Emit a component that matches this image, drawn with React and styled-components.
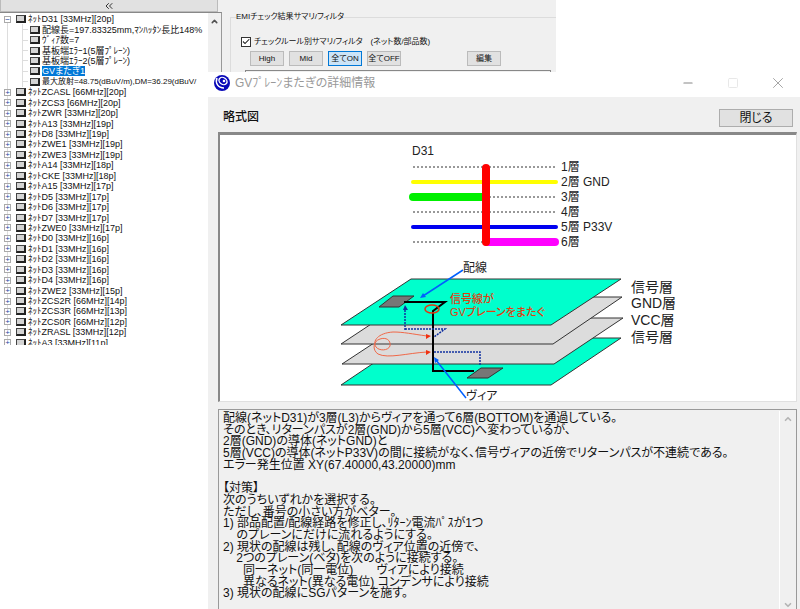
import React, { useState } from "react";
import styled, { createGlobalStyle } from "styled-components";
import { ChevronDown, ChevronUp, ChevronsLeft, Minus, Square, X } from "lucide-react";

const details = [
  "配線長=197.83325mm,ﾏﾝﾊｯﾀﾝ長比148%",
  "ｳﾞｨｱ数=7",
  "基板端ｴﾗｰ1(5層ﾌﾟﾚｰﾝ)",
  "基板端ｴﾗｰ2(5層ﾌﾟﾚｰﾝ)",
  "GVまたぎ1",
  "最大放射=48.75(dBuV/m),DM=36.29(dBuV/"
];

const nets = [
  "ZCASL [66MHz][20p]",
  "ZCS3 [66MHz][20p]",
  "ZWR [33MHz][20p]",
  "A13 [33MHz][19p]",
  "D8 [33MHz][19p]",
  "ZWE1 [33MHz][19p]",
  "ZWE3 [33MHz][19p]",
  "A14 [33MHz][18p]",
  "CKE [33MHz][18p]",
  "A15 [33MHz][17p]",
  "D5 [33MHz][17p]",
  "D6 [33MHz][17p]",
  "D7 [33MHz][17p]",
  "ZWE0 [33MHz][17p]",
  "D0 [33MHz][16p]",
  "D1 [33MHz][16p]",
  "D2 [33MHz][16p]",
  "D3 [33MHz][16p]",
  "D4 [33MHz][16p]",
  "ZWE2 [33MHz][15p]",
  "ZCS2R [66MHz][14p]",
  "ZCS3R [66MHz][13p]",
  "ZCS0R [66MHz][12p]",
  "ZRASL [33MHz][12p]",
  "A3 [33MHz][11p]"
];

const message = [
  "配線(ネットD31)が3層(L3)からヴィアを通って6層(BOTTOM)を通過している。",
  "そのとき、リターンパスが2層(GND)から5層(VCC)へ変わっているが、",
  "2層(GND)の導体(ネットGND)と",
  "5層(VCC)の導体(ネットP33V)の間に接続がなく、信号ヴィアの近傍でリターンパスが不連続である。",
  "エラー発生位置 XY(67.40000,43.20000)mm",
  "",
  "【対策】",
  "次のうちいずれかを選択する。",
  "ただし、番号の小さい方がベター。",
  "1) 部品配置/配線経路を修正し、ﾘﾀｰﾝ電流ﾊﾟｽが1つ",
  "    のプレーンにだけに流れるようにする。",
  "2) 現状の配線は残し、配線のヴィア位置の近傍で、",
  "    2つのプレーン(ベタ)を次のように接続する。",
  "      同一ネット(同一電位)       ヴィアにより接続",
  "      異なるネット(異なる電位) コンデンサにより接続",
  "3) 現状の配線にSGパターンを施す。"
];

const layers = [
  { y: 167, label: "1層" },
  { y: 182, label: "2層 GND" },
  { y: 197, label: "3層" },
  { y: 212, label: "4層" },
  { y: 227, label: "5層 P33V" },
  { y: 242, label: "6層" }
];

const LayerDiagram = () => (
  <Drawing viewBox="220 135 576 266" role="img" aria-label="D31">
    <text x="412" y="155" fontSize="12">D31</text>
    {layers.map(layer => (
      <g key={layer.y}>
        <path d={`M413 ${layer.y}H556`} stroke="#333" strokeDasharray="2 2" />
        <text x="561" y={layer.y + 4} fontSize="12">{layer.label}</text>
      </g>
    ))}
    <g fill="none" strokeLinecap="round">
      <path d="M413 182H556" stroke="#ffff00" strokeWidth="4" />
      <path d="M413 197H485" stroke="#00f000" strokeWidth="8" />
      <path d="M413 227H556" stroke="#0000f0" strokeWidth="4" />
      <path d="M487 242H555" stroke="#ff00ff" strokeWidth="8" />
      <path d="M486 168V242" stroke="#ff0000" strokeWidth="8" />
    </g>

    {/* board stack, bottom plane first */}
    <g stroke="#333" strokeWidth="1">
      <path d="M341 385L411 338H621L551 385Z" fill="#00ffcc" />
      <path d="M342 364L412 318H623L554 364Z" fill="#dcdcdc" />
      <path d="M341 344L412 297H622L553 344Z" fill="#dcdcdc" />
      <path d="M341 325L411 279H621L551 325Z" fill="#00ffcc" />
      <path d="M379 307L393 296H414L399 307Z" fill="#777" />
    </g>
    <path d="M404 302H445L433 311V371H474" fill="none" stroke="#000" strokeWidth="2" />
    <path d="M467 378L481 368H503L488 378Z" fill="#777" stroke="#333" />

    <g fill="none" stroke="#1030a0" strokeDasharray="2 1" strokeWidth="1.5">
      <path d="M405 330V309" />
      <path d="M405 329H445L434 337" />
      <path d="M434 352H480V366" />
    </g>
    <path d="M403 310L405 305L408 310Z" fill="#1030a0" />

    <g fill="none" stroke="#f06848">
      <path d="M427 336C412 334 404 332 393 332C378 333 372 341 376 347C379 351 388 351 390 346C391 340 386 337 380 339C373 341 372 350 378 354C388 359 408 353 427 352" />
      <ellipse cx="432" cy="309" rx="7" ry="4" stroke="#e03810" strokeWidth="1.5" />
    </g>
    <path d="M426 334L431 336L426 339ZM426 350L431 352L426 355Z" fill="#f03010" />

    <g stroke="#0060ff" strokeWidth="1.5">
      <path d="M463 270L423 296" />
      <path d="M466 398L436 360" />
    </g>
    <path d="M420 298L423 293L426 297ZM434 357L439 360L435 363Z" fill="#0060ff" />

    <g fill="#e04010" fontSize="11" fontWeight="500">
      <text x="450" y="303">信号線が</text>
      <text x="450" y="316">GVプレーンをまたぐ</text>
    </g>
    <g fontSize="12">
      <text x="463" y="272">配線</text>
      <text x="466" y="400">ヴィア</text>
    </g>
    <g fontSize="14">
      <text x="631" y="292">信号層</text>
      <text x="631" y="308">GND層</text>
      <text x="631" y="325">VCC層</text>
      <text x="631" y="342">信号層</text>
    </g>
  </Drawing>
);

export default function App() {
  const [byRule, setByRule] = useState(true);

  return (
    <Desktop>
      <GlobalStyle />
      <MainWindow>
        <TreeColumn>
          <CollapseButton aria-label="閉じる">
            <ChevronsLeft size={12} strokeWidth={2} />
          </CollapseButton>
          <TreePane>
            <Tree>
              <TreeRow>
                <Expander>−</Expander>
                <NetIcon />
                <RowText>ﾈｯﾄD31 [33MHz][20p]</RowText>
              </TreeRow>
              {details.map(text => (
                <ChildRow key={text}>
                  <NetIcon />
                  <RowText $selected={text === "GVまたぎ1"} $small={text.length > 30}>
                    {text}
                  </RowText>
                </ChildRow>
              ))}
              {nets.map(net => (
                <TreeRow key={net}>
                  <Expander>+</Expander>
                  <NetIcon />
                  <RowText>ﾈｯﾄ{net}</RowText>
                </TreeRow>
              ))}
            </Tree>
            <TreeScrollbar>
              <ScrollButton aria-label="上へ">
                <ChevronUp size={9} strokeWidth={4} />
              </ScrollButton>
            </TreeScrollbar>
          </TreePane>
        </TreeColumn>

        <FilterPane>
          <FilterGroup>
            <Legend>EMIチェック結果サマリ/フィルタ</Legend>
            <CheckLine>
              <Checkbox
                id="by-rule"
                type="checkbox"
                checked={byRule}
                onChange={e => setByRule(e.target.checked)}
              />
              <label htmlFor="by-rule">チェックルール別サマリ/フィルタ</label>
              <CountNote>(ネット数/部品数)</CountNote>
            </CheckLine>
            <ButtonLine>
              <SmallButton>High</SmallButton>
              <SmallButton>Mid</SmallButton>
              <SmallButton $active>全てON</SmallButton>
              <SmallButton>全てOFF</SmallButton>
              <EditButton>編集</EditButton>
            </ButtonLine>
            <ResultTop />
          </FilterGroup>
        </FilterPane>
      </MainWindow>

      <Dialog>
        <TitleBar>
          <AppIcon viewBox="0 0 16 16">
            <circle cx="8" cy="8" r="8" fill="#0808b8" />
            <path d="M3 3C1 8 4 13 10 13" fill="none" stroke="#fff" strokeWidth="1.5" />
            <ellipse cx="9" cy="6" rx="5" ry="4" fill="#fff" transform="rotate(35 9 6)" />
            <ellipse cx="9" cy="6" rx="3.5" ry="2.7" fill="#0808b8" transform="rotate(35 9 6)" />
            <circle cx="10" cy="6" r="1.3" fill="#fff" />
          </AppIcon>
          <Title>GVﾌﾟﾚｰﾝまたぎの詳細情報</Title>
          <WindowButtons>
            <WindowButton aria-label="最小化"><Minus size={14} strokeWidth={2} /></WindowButton>
            <WindowButton aria-label="最大化" disabled><Square size={12} strokeWidth={2} /></WindowButton>
            <WindowButton aria-label="閉じる"><X size={18} strokeWidth={1} /></WindowButton>
          </WindowButtons>
        </TitleBar>
        <DialogBody>
          <DialogHeader>
            <Heading>略式図</Heading>
            <CloseButton>閉じる</CloseButton>
          </DialogHeader>
          <Canvas>
            <LayerDiagram />
          </Canvas>
          <MessageBox>
            <Message>
              {message.map((line, i) => (
                <Line key={i}>{line}</Line>
              ))}
            </Message>
            <MessageScrollbar>
              <ScrollButton $muted aria-label="上へ">
                <ChevronUp size={10} strokeWidth={4} />
              </ScrollButton>
              <ScrollButton $muted aria-label="下へ">
                <ChevronDown size={10} strokeWidth={4} />
              </ScrollButton>
            </MessageScrollbar>
          </MessageBox>
        </DialogBody>
      </Dialog>
    </Desktop>
  );
}

const GlobalStyle = createGlobalStyle`
  * {
    box-sizing: border-box;
  }
  body {
    margin: 0;
    background: #fff;
    color: #111;
    font-family: "Liberation Sans", "Noto Sans CJK JP", sans-serif;
    font-feature-settings: "palt" 1;
  }
  button {
    padding: 0;
    color: inherit;
    font: inherit;
    font-feature-settings: inherit;
  }
`;

const Desktop = styled.div`
  position: relative;
  min-height: 100vh;
  overflow: hidden;
`;

const MainWindow = styled.div`
  display: flex;
  align-items: flex-start;
  max-width: 556px;
`;

const TreeColumn = styled.div`
  display: flex;
  flex-direction: column;
  flex: 0 0 222px;
  min-width: 0;
  background: #f0f0f0;
`;

const CollapseButton = styled.button`
  display: flex;
  align-items: center;
  justify-content: center;
  height: 12px;
  margin-right: 4px;
  border: 1px solid #bbb;
  border-top: 0;
  background: #e1e1e1;
  color: #333;
`;

const TreePane = styled.div`
  display: flex;
  height: 333px;
  overflow: hidden;
  border-top: 1px solid #888;
  border-right: 1px solid #999;
  background: #fff;
`;

const Tree = styled.ul`
  display: grid;
  grid-auto-rows: 1fr;
  flex: 1;
  min-width: 0;
  height: 335px;
  margin: 0;
  padding: 1px 0 0 4px;
  overflow: hidden;
  background: linear-gradient(#ddd, #ddd) 7px 8px / 1px 100% no-repeat;
  list-style: none;
  font-size: 9px;
  line-height: 10px;
`;

const TreeRow = styled.li`
  display: flex;
  align-items: center;
  gap: 2px;
  min-width: 0;
  min-height: 0;
  white-space: nowrap;
`;

/* nested row with its branch line */
const ChildRow = styled(TreeRow)`
  padding-left: 18px;
  background: linear-gradient(#ddd, #ddd) 18px 0 / 1px 100% no-repeat;

  &::before {
    content: "";
    width: 6px;
    height: 1px;
    background: #ddd;
  }
`;

const Expander = styled.span`
  display: flex;
  flex-shrink: 0;
  align-items: center;
  justify-content: center;
  width: 7px;
  height: 7px;
  margin-right: 3px;
  border: 1px solid #aaa;
  background: #fff;
  color: #2848a0;
  font-size: 8px;
  line-height: 5px;
`;

const NetIcon = styled.span`
  flex-shrink: 0;
  width: 10px;
  height: 8px;
  border: 1px solid #444;
  border-right: 2px solid #222;
  border-bottom: 2px solid #222;
  background: #d4d4d4;
`;

const RowText = styled.span`
  background: ${props => (props.$selected ? "#0078d7" : "transparent")};
  color: ${props => (props.$selected ? "#fff" : "inherit")};
  font-size: ${props => (props.$small ? "8px" : "9px")};
`;

const TreeScrollbar = styled.div`
  flex: 0 0 13px;
  background: #f0f0f0;
`;

const ScrollButton = styled.button`
  display: flex;
  align-items: center;
  justify-content: center;
  width: 100%;
  height: 16px;
  border: 0;
  background: transparent;
  color: ${props => (props.$muted ? "#b4b4b4" : "#505050")};
`;

const FilterPane = styled.div`
  flex: 1;
  min-width: 0;
  padding: 9px 0 0 8px;
  background: #f0f0f0;
  font-size: 8px;
  line-height: 16px;
`;

const FilterGroup = styled.fieldset`
  min-width: 0;
  margin: 0;
  padding: 9px 5px 0 10px;
  border: 1px solid #dcdcdc;
  border-right: 0;
  border-bottom: 0;
`;

const Legend = styled.legend`
  margin-left: -5px;
  padding: 0;
`;

const CheckLine = styled.div`
  display: flex;
  align-items: center;
  gap: 3px;
`;

const Checkbox = styled.input`
  display: grid;
  place-items: center;
  width: 10px;
  height: 10px;
  margin: 0;
  appearance: none;
  border: 1px solid #333;
  background: #fff;

  &:checked::before {
    content: "";
    width: 8px;
    height: 8px;
    background: #222;
    clip-path: polygon(8% 50%, 38% 78%, 95% 18%, 88% 8%, 38% 60%, 16% 38%);
  }
`;

const CountNote = styled.span`
  margin-left: 5px;
`;

const ButtonLine = styled.div`
  display: flex;
  gap: 5px;
  padding: 1px 50px 4px 9px;
`;

const SmallButton = styled.button`
  flex: 0 0 34px;
  height: 15px;
  border: 1px solid ${props => (props.$active ? "#0078d7" : "#bbb")};
  background: ${props => (props.$active ? "#cce4f7" : "#e1e1e1")};
  line-height: 13px;
  white-space: nowrap;
`;

const EditButton = styled(SmallButton)`
  margin-left: auto;
`;

const ResultTop = styled.div`
  height: 2px;
  margin-left: 4px;
  border: 1px solid #888;
  border-bottom: 0;
`;

const Dialog = styled.section`
  position: absolute;
  top: 72px;
  right: 0;
  bottom: 0;
  left: 208px;
  display: flex;
  flex-direction: column;
`;

const TitleBar = styled.header`
  display: flex;
  align-items: center;
  gap: 5px;
  height: 25px;
  padding: 0 8px 4px 6px;
  background: #fff;
`;

const AppIcon = styled.svg`
  width: 16px;
  height: 16px;
`;

const Title = styled.h1`
  margin: 0;
  color: #999;
  font-size: 12px;
  font-weight: 400;
  line-height: 16px;
`;

const WindowButtons = styled.div`
  display: flex;
  gap: 17px;
  margin-left: auto;
`;

const WindowButton = styled.button`
  display: flex;
  align-items: center;
  justify-content: center;
  width: 28px;
  height: 20px;
  border: 0;
  background: transparent;
  color: #888;

  &:disabled {
    color: #e8e8e8;
  }
`;

const DialogBody = styled.div`
  display: flex;
  flex: 1;
  flex-direction: column;
  padding: 12px 3px 0 10px;
  background: #f0f0f0;
  font-size: 12px;
`;

const DialogHeader = styled.div`
  display: flex;
  justify-content: space-between;
  padding: 0 4px 5px 5px;
`;

const Heading = styled.h2`
  margin: 0;
  font-size: 12px;
  font-weight: 500;
  line-height: 16px;
`;

const CloseButton = styled.button`
  width: 74px;
  height: 18px;
  border: 1px solid #adadad;
  background: #e1e1e1;
  line-height: 16px;
`;

const Canvas = styled.div`
  border: 1px solid #e0e0e0;
  border-top: 3px solid #888;
  border-left: 2px solid #888;
  background: #fff;
`;

const Drawing = styled.svg`
  display: block;
  width: 576px;
  height: 266px;
  fill: #222;
`;

const MessageBox = styled.div`
  display: flex;
  flex: 1;
  margin-top: 7px;
  border: 1px solid #999;
  border-bottom: 0;
`;

const Message = styled.div`
  display: grid;
  grid-auto-rows: 1fr;
  flex: 1;
  height: 187px;
  margin: 2px 0 0 4px;
  line-height: 12px;
`;

const Line = styled.div`
  min-height: 0;
  white-space: pre;
`;

const MessageScrollbar = styled.div`
  display: flex;
  flex: 0 0 17px;
  flex-direction: column;
  justify-content: space-between;
  margin: 1px 0 -4px;
  border-left: 1px solid #fff;
`;
